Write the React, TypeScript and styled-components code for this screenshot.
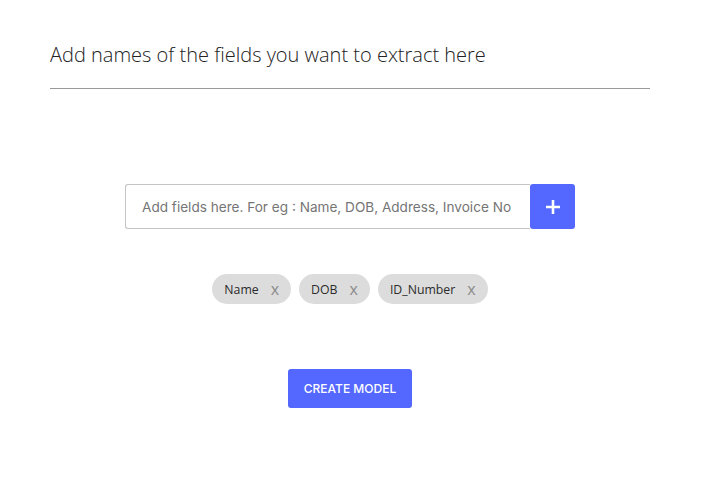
import React, { useState } from "react";
import styled, { createGlobalStyle } from "styled-components";

const GlobalStyle = createGlobalStyle`
  body {
    margin: 0;
    background: #ffffff;
    font-family: "Open Sans", sans-serif;
  }
`;

const Page = styled.div`
  width: 600px;
  padding: 41px 0 0 50px;
`;

const Title = styled.h1`
  margin: 0;
  padding-bottom: 19px;
  font-family: "Open Sans", sans-serif;
  font-weight: 300;
  font-size: 20px;
  line-height: 28px;
  color: #222;
  border-bottom: 1px solid #999;
`;

const Body = styled.div`
  display: flex;
  flex-direction: column;
  align-items: center;
  padding-top: 95px;
`;

const InputGroup = styled.div`
  display: flex;
  width: 450px;
  height: 45px;
`;

const FieldInput = styled.input`
  flex: 1;
  min-width: 0;
  box-sizing: border-box;
  height: 100%;
  padding: 0 12px 0 16px;
  border: 1px solid #c4c4c4;
  border-right: none;
  border-radius: 3px 0 0 3px;
  font-family: "Inter", sans-serif;
  font-size: 13.6px;
  color: #333;
  outline: none;

  &::placeholder {
    color: #757575;
  }
`;

const AddButton = styled.button`
  width: 45px;
  height: 100%;
  border: none;
  border-radius: 3px;
  background: #5468ff;
  display: flex;
  align-items: center;
  justify-content: center;
  cursor: pointer;
`;

const Chips = styled.div`
  display: flex;
  gap: 8px;
  margin-top: 45px;
`;

const Chip = styled.div`
  display: flex;
  align-items: center;
  height: 30px;
  padding: 0 12px 0 12px;
  border-radius: 15px;
  background: #dcdcdc;
  font-family: "Open Sans", sans-serif;
  font-size: 12.3px;
  color: #2b2b2b;
`;

const ChipClose = styled.span`
  margin-left: 12px;
  font-size: 16px;
  color: #8a8a8a;
  cursor: pointer;
  line-height: 1;
`;

const CreateButton = styled.button`
  margin-top: 65px;
  width: 124px;
  height: 39px;
  border: none;
  border-radius: 3px;
  background: #5468ff;
  color: #ffffff;
  font-family: "Inter", sans-serif;
  font-size: 12px;
  font-weight: 500;
  cursor: pointer;
`;

const PlusIcon = () => (
  <svg width="16" height="16" viewBox="0 0 16 16">
    <path d="M8 1v14M1 8h14" stroke="#fff" strokeWidth="2.6" />
  </svg>
);

export default function App() {
  const [fields, setFields] = useState(["Name", "DOB", "ID_Number"]);

  return (
    <>
      <GlobalStyle />
      <Page>
        <Title>Add names of the fields you want to extract here</Title>
        <Body>
          <InputGroup>
            <FieldInput placeholder="Add fields here. For eg : Name, DOB, Address, Invoice No" />
            <AddButton>
              <PlusIcon />
            </AddButton>
          </InputGroup>
          <Chips>
            {fields.map((field) => (
              <Chip key={field}>
                {field}
                <ChipClose onClick={() => setFields(fields.filter((f) => f !== field))}>x</ChipClose>
              </Chip>
            ))}
          </Chips>
          <CreateButton>CREATE MODEL</CreateButton>
        </Body>
      </Page>
    </>
  );
}
